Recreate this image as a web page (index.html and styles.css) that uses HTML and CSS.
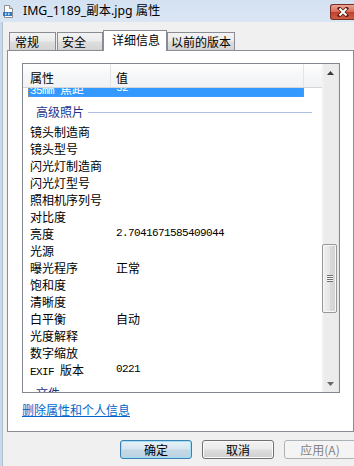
FILE: index.html
```html
<!DOCTYPE html>
<html lang="zh-CN">
<head>
<meta charset="utf-8">
<title>IMG_1189_副本.jpg 属性</title>
<link rel="stylesheet" href="styles.css">
</head>
<body>
<div class="window">
  <div class="titlebar">
    <svg class="app-icon" width="10" height="13" viewBox="0 0 10 13">
      <path d="M1.5 0.5 H6.5 L9.5 3.5 V12.5 H1.5 Z" fill="#ffffff" stroke="#8d8d8d"/>
      <path d="M6.5 0.5 V3.5 H9.5" fill="#e4e4e4" stroke="#8d8d8d"/>
      <rect x="0" y="7" width="9" height="4" fill="#2f78c2"/>
      <path d="M2 8 L3.5 9 L2 10 M5 8 L6.5 9 L5 10" fill="none" stroke="#ffffff" stroke-width="0.8"/>
    </svg>
    <span class="title">IMG_1189_副本.jpg 属性</span>
    <div class="close-btn">
      <svg width="12" height="10" viewBox="0 0 12 10">
        <path d="M2.5 1.5 L9.5 8.5 M9.5 1.5 L2.5 8.5" stroke="#5b1d14" stroke-width="3.6" stroke-linecap="square"/>
        <path d="M2.5 1.5 L9.5 8.5 M9.5 1.5 L2.5 8.5" stroke="#ffffff" stroke-width="2"/>
      </svg>
    </div>
  </div>
  <div class="client">
    <div class="tabs">
      <div class="tab tab-general">常规</div>
      <div class="tab tab-security">安全</div>
      <div class="tab tab-details active">详细信息</div>
      <div class="tab tab-prev">以前的版本</div>
    </div>
    <div class="panel">
      <div class="listview">
        <div class="list-main">
          <div class="list-header">
            <div class="hcol hcol-name">属性</div>
            <div class="hcol hcol-value">值</div>
            <div class="hcol hcol-rest"></div>
          </div>
          <div class="list-body">
            <div class="list-scroll">
              <div class="row selected"><span class="cname"><span class="mono">35mm </span>焦距</span><span class="cval mono">32</span></div>
              <div class="group"><span class="group-label">高级照片</span><span class="group-line"></span></div>
              <div class="row"><span class="cname">镜头制造商</span><span class="cval"></span></div>
              <div class="row"><span class="cname">镜头型号</span><span class="cval"></span></div>
              <div class="row"><span class="cname">闪光灯制造商</span><span class="cval"></span></div>
              <div class="row"><span class="cname">闪光灯型号</span><span class="cval"></span></div>
              <div class="row"><span class="cname">照相机序列号</span><span class="cval"></span></div>
              <div class="row"><span class="cname">对比度</span><span class="cval"></span></div>
              <div class="row"><span class="cname">亮度</span><span class="cval mono">2.7041671585409044</span></div>
              <div class="row"><span class="cname">光源</span><span class="cval"></span></div>
              <div class="row"><span class="cname">曝光程序</span><span class="cval">正常</span></div>
              <div class="row"><span class="cname">饱和度</span><span class="cval"></span></div>
              <div class="row"><span class="cname">清晰度</span><span class="cval"></span></div>
              <div class="row"><span class="cname">白平衡</span><span class="cval">自动</span></div>
              <div class="row"><span class="cname">光度解释</span><span class="cval"></span></div>
              <div class="row"><span class="cname">数字缩放</span><span class="cval"></span></div>
              <div class="row"><span class="cname"><span class="mono">EXIF </span>版本</span><span class="cval mono">0221</span></div>
              <div class="group"><span class="group-label">文件</span><span class="group-line"></span></div>
            </div>
          </div>
        </div>
        <div class="scrollbar">
          <div class="sb-btn">
            <svg width="7" height="4" viewBox="0 0 7 4"><path d="M3.5 0 L7 4 H0 Z" fill="#3a3a3a"/></svg>
          </div>
          <div class="sb-track">
            <div class="sb-thumb"><span class="grip"></span></div>
          </div>
          <div class="sb-btn">
            <svg width="7" height="4" viewBox="0 0 7 4"><path d="M0 0 H7 L3.5 4 Z" fill="#6a6a6a"/></svg>
          </div>
        </div>
      </div>
      <a class="remove-link" href="#">删除属性和个人信息</a>
    </div>
    <div class="buttons">
      <button class="btn btn-default">确定</button>
      <button class="btn">取消</button>
      <button class="btn" disabled>应用(A)</button>
    </div>
  </div>
</div>
</body>
</html>
```
FILE: styles.css
```css
* { box-sizing: border-box; }
html, body { margin: 0; padding: 0; }
body {
  width: 354px;
  height: 466px;
  overflow: hidden;
  background: #f0f0f0;
  font-family: "Noto Sans CJK SC", sans-serif;
  font-size: 12px;
  color: #000;
}
.window {
  width: 354px;
  height: 466px;
  display: flex;
  flex-direction: column;
}
.titlebar {
  height: 22px;
  flex: none;
  display: flex;
  align-items: flex-start;
  background: linear-gradient(#d3e1f1, #dbe6f4);
}
.app-icon { flex: none; margin: 5px 0 0 3px; }
.title {
  margin: 3px 0 0 10px;
  font-family: "Noto Sans", "Noto Sans CJK SC", sans-serif;
  font-size: 12.3px;
  line-height: 16px;
  white-space: nowrap;
}
.close-btn {
  flex: none;
  margin-left: auto;
  margin-top: 4px;
  width: 24px;
  height: 16px;
  border: 1px solid #7a2f26;
  border-right: none;
  border-radius: 3px 0 0 3px;
  background: linear-gradient(#eba597, #d86c58 48%, #c2402b 52%, #cf5d46);
  display: flex;
  align-items: center;
  justify-content: center;
}
.client {
  flex: 1;
  display: flex;
  flex-direction: column;
  border-left: 2px solid #c9d9ec;
  box-shadow: inset 1px 0 0 #b2bfcd;
}
.tabs {
  height: 21px;
  margin: 8px 0 -1px 7px;
  display: flex;
  align-items: flex-end;
}
.tab {
  height: 18px;
  margin-bottom: 1px;
  border: 1px solid #898c95;
  border-bottom: none;
  background: linear-gradient(#f3f3f3, #ebebeb 45%, #dedede 55%, #d3d3d3);
  padding-top: 1px;
  line-height: 16px;
  white-space: nowrap;
}
.tab-general { width: 47px; padding-left: 5px; margin-right: 1px; }
.tab-security { width: 46px; padding-left: 4px; }
.tab-details { width: 64px; padding-left: 8px; }
.tab-prev { width: 68px; padding-left: 3px; }
.tab.active {
  height: 21px;
  margin-bottom: 0;
  background: #ffffff;
  position: relative;
  z-index: 1;
}
.panel {
  margin-left: 5px;
  width: 347px;
  height: 382px;
  border: 1px solid #898c95;
  background: #ffffff;
  padding: 12px 0 0 14px;
  flex: none;
}
.listview {
  width: 318px;
  height: 330px;
  border: 1px solid #828790;
  display: flex;
}
.list-main {
  flex: 1;
  display: flex;
  flex-direction: column;
  min-width: 0;
}
.list-header {
  height: 24px;
  flex: none;
  display: flex;
  border-bottom: 1px solid #d5d5d5;
  background: linear-gradient(#ffffff, #f7f8f9 40%, #f1f2f3);
}
.hcol {
  padding-top: 6px;
  line-height: 16px;
}
.hcol-name { width: 88px; padding-left: 7px; border-right: 1px solid #e3e4e6; }
.hcol-value { width: 193px; padding-left: 5px; border-right: 1px solid #e3e4e6; }
.hcol-rest { flex: 1; }
.list-body {
  flex: 1;
  overflow: hidden;
}
.list-scroll { margin-top: -8px; }
.row {
  height: 17px;
  line-height: 17px;
  margin-left: 5px;
  width: 276px;
  padding-left: 2px;
  display: flex;
  white-space: nowrap;
}
.cname { width: 86px; flex: none; }
.cval { flex: 1; }
.mono {
  font-family: "Liberation Mono", monospace;
  font-size: 11px;
  letter-spacing: -0.6px;
}
.row.selected {
  background: #3399ff;
  color: #ffffff;
  outline: 1px dotted #c8823a;
  outline-offset: -1px;
}
.group {
  height: 26px;
  margin-left: 5px;
  width: 284px;
  padding: 4px 0 0 8px;
  display: flex;
  align-items: center;
}
.group-label {
  color: #1e3287;
  line-height: 16px;
  white-space: nowrap;
}
.group-line {
  flex: 1;
  height: 1px;
  margin-left: 4px;
  background: #aebee4;
}
.scrollbar {
  width: 17px;
  flex: none;
  display: flex;
  flex-direction: column;
  background: linear-gradient(90deg, #f4f4f4, #ececec 15%, #ececec 85%, #e6e6e6);
}
.sb-btn {
  height: 17px;
  flex: none;
  display: flex;
  align-items: center;
  justify-content: center;
}
.sb-track {
  flex: 1;
  padding-top: 163px;
}
.sb-thumb {
  width: 15px;
  height: 69px;
  border: 1px solid #979797;
  border-radius: 2px;
  background: linear-gradient(90deg, #f1f1f1, #e6e6e6 50%, #d9d9d9 52%, #d3d3d3);
  box-shadow: inset 0 0 0 1px #f8f8f8;
  display: flex;
  align-items: center;
  justify-content: center;
}
.grip {
  width: 6px;
  height: 7px;
  background: repeating-linear-gradient(#707070 0 1px, #f6f6f6 1px 2px);
}
.remove-link {
  display: inline-block;
  margin-top: 9px;
  line-height: 16px;
  color: #0066cc;
  text-decoration: underline;
}
.buttons {
  margin-top: 8px;
  padding-left: 118px;
  display: flex;
}
.btn {
  width: 72px;
  height: 19px;
  flex: none;
  padding: 0;
  border: 1px solid #707070;
  border-radius: 3px;
  background: linear-gradient(#f2f2f2, #ebebeb 45%, #dddddd 55%, #cfcfcf);
  box-shadow: inset 0 0 0 1px #fbfbfb;
  font-family: "Noto Sans CJK SC", sans-serif;
  font-size: 12px;
  line-height: 17px;
  color: #000;
}
.btn + .btn { margin-left: 10px; }
.btn-default {
  border-color: #3c7fb1;
  background: linear-gradient(#e8f2f8, #d6e6f0 45%, #c4d9e6 55%, #bcd2e0);
  box-shadow: inset 0 0 0 1px #9edff7;
}
.btn:disabled {
  border-color: #adb2b5;
  background: #f4f4f4;
  box-shadow: none;
  color: #838383;
}
```
